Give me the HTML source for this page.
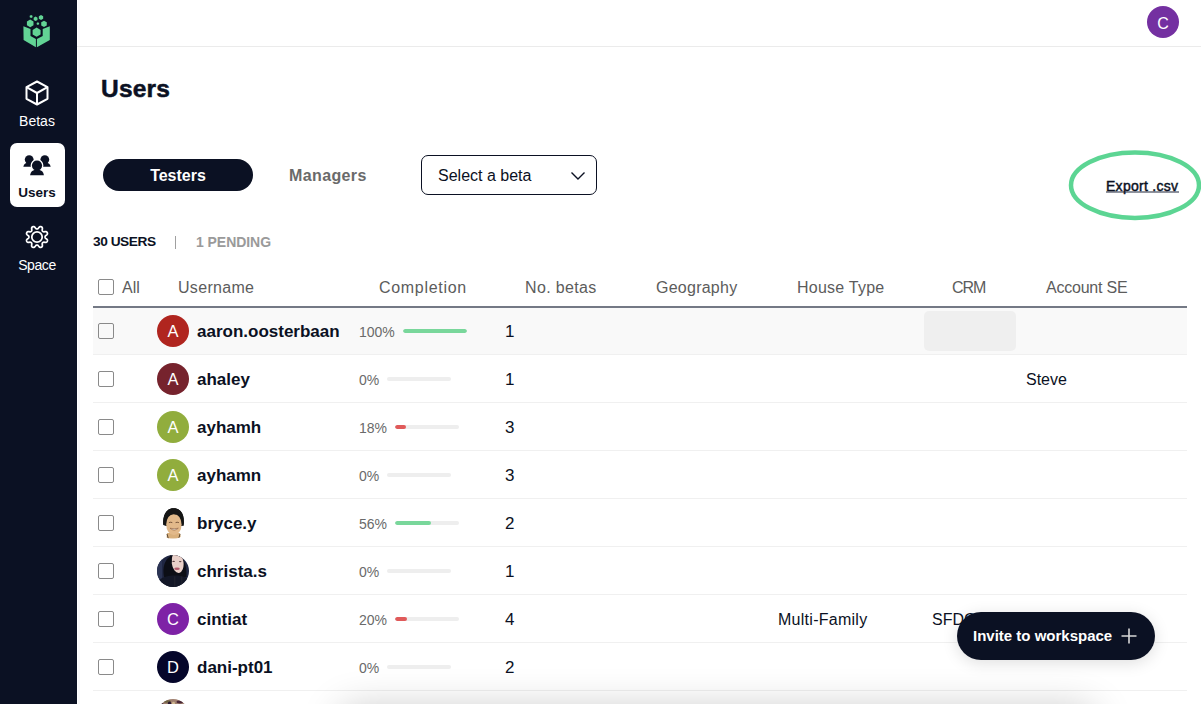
<!DOCTYPE html>
<html><head><meta charset="utf-8">
<style>
*{box-sizing:border-box;margin:0;padding:0}
html,body{width:1201px;height:704px;overflow:hidden;background:#fff;font-family:"Liberation Sans",sans-serif;color:#0b1123}
.abs{position:absolute}
#side{position:absolute;left:0;top:0;width:77px;height:704px;background:#0b1123}
.nav{position:absolute;left:0;width:74px;text-align:center;color:#fff;font-size:14px;line-height:16px}
#navsel{position:absolute;left:10px;top:143px;width:55px;height:64px;background:#fff;border-radius:7px}
#hdrline{position:absolute;left:77px;top:46px;width:1124px;height:1px;background:#ebebeb}
#me{position:absolute;left:1147px;top:6px;width:32px;height:32px;border-radius:50%;background:#7430a1;color:#fff;font-size:16px;line-height:36px;text-align:center}
#title{position:absolute;left:101px;top:76px;font-size:24.5px;line-height:25px;letter-spacing:0.2px;font-weight:bold;color:#0b1123;-webkit-text-stroke:0.5px #0b1123}
#testers{position:absolute;left:103px;top:159px;width:150px;height:32px;border-radius:16px;background:#0b1123;color:#fff;font-weight:bold;font-size:16px;line-height:34px;text-align:center}
#managers{position:absolute;left:289px;top:160px;font-weight:bold;font-size:16px;line-height:32px;color:#6a6a6a;letter-spacing:0.38px}
#select{position:absolute;left:421px;top:155px;width:176px;height:40px;border:1px solid #0b1123;border-radius:7px;font-size:16px;line-height:40px;padding-left:16px;color:#0b1123}
#export{position:absolute;left:1106px;top:178px;font-size:14px;line-height:16px;font-weight:normal;-webkit-text-stroke:0.45px #0b1123;letter-spacing:0.28px;color:#0b1123}
#counts{position:absolute;left:93px;top:234px;font-size:13.5px;line-height:16px;font-weight:bold}
.cb{position:absolute;width:16px;height:16px;border:1px solid #8a8a8a;border-radius:2px;background:transparent}
.th{position:absolute;top:279px;font-size:16px;line-height:18px;color:#5c5c5c}
#thline{position:absolute;left:93px;top:306px;width:1094px;height:2px;background:#747985}
.row{position:absolute;left:93px;width:1094px;height:47px;border-bottom:1px solid #f0f0f0}
.av{position:absolute;left:64px;top:7px;width:32px;height:32px;border-radius:50%;color:#fff;font-size:16.5px;line-height:33px;text-align:center;overflow:hidden}
.un{position:absolute;left:104px;top:14px;font-size:17px;line-height:20px;font-weight:bold;color:#0b1123}
.pct{position:absolute;left:266px;top:16px;font-size:14px;line-height:16px;color:#6a6a6a}
.bar{position:absolute;top:22px;width:64px;height:4px;border-radius:2px;background:#eeeeee;overflow:hidden}
.bar i{position:absolute;left:0;top:0;height:4px;border-radius:2px}
.nb{position:absolute;left:412px;top:14px;font-size:17px;line-height:20px;color:#0b1123}
.cell{position:absolute;top:14px;font-size:16px;line-height:20px;color:#0b1123}
#invite{position:absolute;left:957px;top:612px;width:198px;height:48px;border-radius:24px;background:#0b1123;color:#fff;font-weight:bold;font-size:15px;line-height:48px;padding-left:16px;box-shadow:0 3px 16px rgba(0,0,0,.13)}
</style></head>
<body>
<div id="side">
  <!-- logo -->
  <svg class="abs" style="left:20px;top:10px" width="35" height="40" viewBox="20 10 35 40">
    <g fill="#62d495">
      <polygon points="30.20,19.60 26.91,21.50 26.91,25.30 30.20,27.20 33.49,25.30 33.49,21.50"/>
      <polygon points="31.10,14.90 29.71,15.70 29.71,17.30 31.10,18.10 32.49,17.30 32.49,15.70"/>
      <polygon points="35.60,16.60 33.69,17.70 33.69,19.90 35.60,21.00 37.51,19.90 37.51,17.70"/>
      <polygon points="41.00,14.90 38.83,16.15 38.83,18.65 41.00,19.90 43.17,18.65 43.17,16.15"/>
      <polygon points="37.90,22.20 36.69,22.90 36.69,24.30 37.90,25.00 39.11,24.30 39.11,22.90"/>
      <polygon points="44.00,20.70 41.23,22.30 41.23,25.50 44.00,27.10 46.77,25.50 46.77,22.30"/>
      <polygon points="36.60,27.60 32.62,29.90 32.62,34.50 36.60,36.80 40.58,34.50 40.58,29.90"/>
      <polygon points="23.4,26.2 30.5,28.9 30.5,35.9 35.9,39 35.9,47.3 23.6,40.1"/>
      <polygon points="49.8,26.2 42.7,28.9 42.7,35.9 36.9,39 36.9,47.3 49.8,40.1"/>
    </g>
  </svg>
  <!-- cube -->
  <svg class="abs" style="left:25px;top:80px" width="24" height="26" viewBox="0 0 24 26" fill="none" stroke="#fff" stroke-width="2" stroke-linejoin="round">
    <path d="M12 1.5 L22.5 7.2 V18.8 L12 24.5 L1.5 18.8 V7.2 Z"/>
    <path d="M1.5 7.2 L12 13 L22.5 7.2 M12 13 V24.5"/>
  </svg>
  <div class="nav" style="top:113px">Betas</div>
  <div id="navsel"></div>
  <!-- users icon -->
  <svg class="abs" style="left:23px;top:155px" width="28" height="22" viewBox="0 0 28 22">
    <g fill="#0b1123">
      <circle cx="6.2" cy="4.6" r="4.4"/>
      <path d="M0.3 11.8 C0.9 9 3 7.6 6.2 7.6 C9.4 7.6 11.5 9 12.1 11.8 Z"/>
      <circle cx="21.8" cy="4.6" r="4.4"/>
      <path d="M15.9 11.8 C16.5 9 18.6 7.6 21.8 7.6 C25 7.6 27.1 9 27.7 11.8 Z"/>
    </g>
    <g fill="#fff" stroke="#fff" stroke-width="2.6">
      <circle cx="14" cy="10.6" r="5.1"/>
      <path d="M7.1 20.3 C7.6 16.8 10 14.6 14 14.6 C18 14.6 20.4 16.8 20.9 20.3 Z"/>
    </g>
    <g fill="#0b1123">
      <circle cx="14" cy="10.6" r="5.1"/>
      <path d="M7.1 20.3 C7.6 16.8 10 14.6 14 14.6 C18 14.6 20.4 16.8 20.9 20.3 Z"/>
    </g>
  </svg>
  <div class="nav" style="top:185px;color:#0b1123;font-weight:bold;font-size:13.5px">Users</div>
  <!-- gear -->
  <svg class="abs" style="left:25px;top:225px" width="24" height="24" viewBox="0 0 24 24" fill="none" stroke="#fff" stroke-width="1.75" stroke-linejoin="round">
    <path d="M12.00 3.90 L12.21 3.89 L12.43 3.87 L12.64 3.81 L12.87 3.71 L13.12 3.53 L13.39 3.23 L13.70 2.81 L14.05 2.36 L14.41 1.97 L14.76 1.71 L15.09 1.58 L15.40 1.55 L15.69 1.58 L15.97 1.65 L16.25 1.74 L16.51 1.87 L16.76 2.02 L16.99 2.21 L17.18 2.45 L17.33 2.77 L17.39 3.20 L17.37 3.73 L17.29 4.30 L17.22 4.81 L17.20 5.22 L17.25 5.52 L17.33 5.76 L17.45 5.95 L17.58 6.12 L17.73 6.27 L17.88 6.42 L18.05 6.55 L18.24 6.67 L18.48 6.75 L18.78 6.80 L19.19 6.78 L19.70 6.71 L20.27 6.63 L20.80 6.61 L21.23 6.67 L21.55 6.82 L21.79 7.01 L21.98 7.24 L22.13 7.49 L22.26 7.75 L22.35 8.03 L22.42 8.31 L22.45 8.60 L22.42 8.91 L22.29 9.24 L22.03 9.59 L21.64 9.95 L21.19 10.30 L20.77 10.61 L20.47 10.88 L20.29 11.13 L20.19 11.36 L20.13 11.57 L20.11 11.79 L20.10 12.00 L20.11 12.21 L20.13 12.43 L20.19 12.64 L20.29 12.87 L20.47 13.12 L20.77 13.39 L21.19 13.70 L21.64 14.05 L22.03 14.41 L22.29 14.76 L22.42 15.09 L22.45 15.40 L22.42 15.69 L22.35 15.97 L22.26 16.25 L22.13 16.51 L21.98 16.76 L21.79 16.99 L21.55 17.18 L21.23 17.33 L20.80 17.39 L20.27 17.37 L19.70 17.29 L19.19 17.22 L18.78 17.20 L18.48 17.25 L18.24 17.33 L18.05 17.45 L17.88 17.58 L17.73 17.73 L17.58 17.88 L17.45 18.05 L17.33 18.24 L17.25 18.48 L17.20 18.78 L17.22 19.19 L17.29 19.70 L17.37 20.27 L17.39 20.80 L17.33 21.23 L17.18 21.55 L16.99 21.79 L16.76 21.98 L16.51 22.13 L16.25 22.26 L15.97 22.35 L15.69 22.42 L15.40 22.45 L15.09 22.42 L14.76 22.29 L14.41 22.03 L14.05 21.64 L13.70 21.19 L13.39 20.77 L13.12 20.47 L12.87 20.29 L12.64 20.19 L12.43 20.13 L12.21 20.11 L12.00 20.10 L11.79 20.11 L11.57 20.13 L11.36 20.19 L11.13 20.29 L10.88 20.47 L10.61 20.77 L10.30 21.19 L9.95 21.64 L9.59 22.03 L9.24 22.29 L8.91 22.42 L8.60 22.45 L8.31 22.42 L8.03 22.35 L7.75 22.26 L7.49 22.13 L7.24 21.98 L7.01 21.79 L6.82 21.55 L6.67 21.23 L6.61 20.80 L6.63 20.27 L6.71 19.70 L6.78 19.19 L6.80 18.78 L6.75 18.48 L6.67 18.24 L6.55 18.05 L6.42 17.88 L6.27 17.73 L6.12 17.58 L5.95 17.45 L5.76 17.33 L5.52 17.25 L5.22 17.20 L4.81 17.22 L4.30 17.29 L3.73 17.37 L3.20 17.39 L2.77 17.33 L2.45 17.18 L2.21 16.99 L2.02 16.76 L1.87 16.51 L1.74 16.25 L1.65 15.97 L1.58 15.69 L1.55 15.40 L1.58 15.09 L1.71 14.76 L1.97 14.41 L2.36 14.05 L2.81 13.70 L3.23 13.39 L3.53 13.12 L3.71 12.87 L3.81 12.64 L3.87 12.43 L3.89 12.21 L3.90 12.00 L3.89 11.79 L3.87 11.57 L3.81 11.36 L3.71 11.13 L3.53 10.88 L3.23 10.61 L2.81 10.30 L2.36 9.95 L1.97 9.59 L1.71 9.24 L1.58 8.91 L1.55 8.60 L1.58 8.31 L1.65 8.03 L1.74 7.75 L1.87 7.49 L2.02 7.24 L2.21 7.01 L2.45 6.82 L2.77 6.67 L3.20 6.61 L3.73 6.63 L4.30 6.71 L4.81 6.78 L5.22 6.80 L5.52 6.75 L5.76 6.67 L5.95 6.55 L6.12 6.42 L6.27 6.27 L6.42 6.12 L6.55 5.95 L6.67 5.76 L6.75 5.52 L6.80 5.22 L6.78 4.81 L6.71 4.30 L6.63 3.73 L6.61 3.20 L6.67 2.77 L6.82 2.45 L7.01 2.21 L7.24 2.02 L7.49 1.87 L7.75 1.74 L8.03 1.65 L8.31 1.58 L8.60 1.55 L8.91 1.58 L9.24 1.71 L9.59 1.97 L9.95 2.36 L10.30 2.81 L10.61 3.23 L10.88 3.53 L11.13 3.71 L11.36 3.81 L11.57 3.87 L11.79 3.89 Z"/>
    <circle cx="12" cy="12" r="5.2"/>
  </svg>
  <div class="nav" style="top:257px;letter-spacing:-0.4px">Space</div>
</div>

<div class="abs" style="left:78px;top:0;width:2px;height:704px;background:#fafafa"></div>
<div id="hdrline"></div>
<div id="me">C</div>
<div id="title">Users</div>
<div id="testers">Testers</div>
<div id="managers">Managers</div>
<div id="select">Select a beta
  <svg class="abs" style="left:148px;top:15px" width="16" height="10" viewBox="0 0 16 10" fill="none" stroke="#0b1123" stroke-width="1.4"><path d="M1.5 1.5 L8 8 L14.5 1.5"/></svg>
</div>
<svg class="abs" style="left:1066px;top:148px" width="140" height="75" viewBox="0 0 140 75">
  <ellipse cx="69" cy="37.2" rx="64" ry="32.7" fill="none" stroke="#5cd593" stroke-width="4.5"/>
</svg>
<div class="abs" style="left:1106px;top:191px;width:73px;height:2px;background:#8e929d"></div>
<div id="export">Export .csv</div>

<div id="counts"><span style="letter-spacing:-0.45px;font-size:13.7px">30 USERS</span></div>
<div class="abs" style="left:175px;top:236px;width:1.3px;height:13px;background:#a0a0a0"></div>
<div class="abs" style="left:196px;top:234px;font-size:14px;line-height:16px;font-weight:bold;color:#9a9a9a;letter-spacing:-0.05px">1 PENDING</div>

<div class="cb" style="left:98px;top:279px"></div>
<div class="th" style="left:122px">All</div>
<div class="th" style="left:178px;letter-spacing:0.31px">Username</div>
<div class="th" style="left:379px;letter-spacing:0.69px">Completion</div>
<div class="th" style="left:525px;letter-spacing:0.35px">No. betas</div>
<div class="th" style="left:656px;letter-spacing:0.25px">Geography</div>
<div class="th" style="left:797px;letter-spacing:0.23px">House Type</div>
<div class="th" style="left:952px;letter-spacing:-1.0px">CRM</div>
<div class="th" style="left:1046px;letter-spacing:-0.22px">Account SE</div>
<div id="thline"></div>

<div id="rows">
<div class="row" style="top:308px;background:#f9f9f9">
<div class="abs" style="left:831px;top:3px;width:92px;height:40px;border-radius:5px;background:#efefef"></div>
<div class="cb" style="left:5px;top:15px"></div>
<div class="av" style="background:#b0251f">A</div>
<div class="un">aaron.oosterbaan</div>
<div class="pct">100%<span class="bar" style="position:relative;display:inline-block;top:-4px;margin-left:8px"><i style="width:64px;background:#79d79b"></i></span></div>
<div class="nb">1</div>
</div>
<div class="row" style="top:356px;background:transparent">
<div class="cb" style="left:5px;top:15px"></div>
<div class="av" style="background:#76232d">A</div>
<div class="un">ahaley</div>
<div class="pct">0%<span class="bar" style="position:relative;display:inline-block;top:-4px;margin-left:8px"></span></div>
<div class="nb">1</div>
<div class="cell" style="left:933px">Steve</div>
</div>
<div class="row" style="top:404px;background:transparent">
<div class="cb" style="left:5px;top:15px"></div>
<div class="av" style="background:#91ad3d">A</div>
<div class="un">ayhamh</div>
<div class="pct">18%<span class="bar" style="position:relative;display:inline-block;top:-4px;margin-left:8px"><i style="width:11px;background:#e05a5a"></i></span></div>
<div class="nb">3</div>
</div>
<div class="row" style="top:452px;background:transparent">
<div class="cb" style="left:5px;top:15px"></div>
<div class="av" style="background:#91ad3d">A</div>
<div class="un">ayhamn</div>
<div class="pct">0%<span class="bar" style="position:relative;display:inline-block;top:-4px;margin-left:8px"></span></div>
<div class="nb">3</div>
</div>
<div class="row" style="top:500px;background:transparent">
<div class="cb" style="left:5px;top:15px"></div>
<div class="av" style="background:#fff"><svg width="32" height="32" viewBox="0 0 32 32">
<path d="M6.3 18 C5.4 9 9 1.2 16.5 1.2 C24.5 1.2 27.8 8 26.7 18.8 L24 19 L9 19 Z" fill="#151515"/>
<path d="M10 26 L23 26 L24 31.5 L9.5 31.5 Z" fill="#d9b07c"/>
<path d="M10 27 L11.3 31.5 M23 27 L21.8 31.5" stroke="#4a3a2a" stroke-width="0.9"/>
<ellipse cx="16.9" cy="17.6" rx="7.7" ry="10.6" fill="#e2b98a"/>
<path d="M8.3 16.5 L8.9 12 C10.8 9.2 12.8 7.6 15 7.4 C19 7.1 22.5 7.9 24.8 9.4 L25.4 14 L26.7 18.8 C27.8 8 24.5 1.2 16.5 1.2 C9 1.2 5.4 9 6.3 18 Z" fill="#151515"/>
<path d="M11.9 15.6 Q13.6 14.9 15.3 15.6 M18.6 15.6 Q20.2 14.9 21.9 15.6" stroke="#6b4a32" stroke-width="0.9" fill="none"/>
<path d="M13 21.2 Q17.2 25 21.3 21.2 Q17.2 22.4 13 21.2 Z" fill="#f3ede4" stroke="#8a5a3c" stroke-width="0.6"/>
</svg></div>
<div class="un">bryce.y</div>
<div class="pct">56%<span class="bar" style="position:relative;display:inline-block;top:-4px;margin-left:8px"><i style="width:36px;background:#79d79b"></i></span></div>
<div class="nb">2</div>
</div>
<div class="row" style="top:548px;background:transparent">
<div class="cb" style="left:5px;top:15px"></div>
<div class="av" style="background:#1f2642"><svg width="32" height="32" viewBox="0 0 32 32">
<rect x="0" y="0" width="5" height="32" fill="#2b3454"/>
<path d="M7 22 C5 12 8 1 18 0 C26 0 30 8 29.5 22 Z" fill="#0c0e16"/>
<ellipse cx="20.6" cy="7.6" rx="5.9" ry="10.4" transform="rotate(-8 20.6 7.6)" fill="#e9d0c9"/>
<path d="M14 0 C15 4 14.8 7 14.6 9 C13.6 5 13 2 13.4 0 Z" fill="#0c0e16"/>
<ellipse cx="16.6" cy="6.4" rx="1.3" ry="0.6" fill="#5a4040"/>
<ellipse cx="23.2" cy="6.6" rx="1.3" ry="0.6" fill="#5a4040"/>
<ellipse cx="20" cy="13.8" rx="2.8" ry="1.25" fill="#b35a6c"/>
<path d="M0 27 C4 22 11 20.5 18 20.5 C25 20.5 29 22 32 25 V32 H0 Z" fill="#131727"/>
<path d="M17.8 21.5 V32 M24.8 21.5 V32" stroke="#2e2e36" stroke-width="0.6"/>
</svg></div>
<div class="un">christa.s</div>
<div class="pct">0%<span class="bar" style="position:relative;display:inline-block;top:-4px;margin-left:8px"></span></div>
<div class="nb">1</div>
</div>
<div class="row" style="top:596px;background:transparent">
<div class="cb" style="left:5px;top:15px"></div>
<div class="av" style="background:#7e22a6">C</div>
<div class="un">cintiat</div>
<div class="pct">20%<span class="bar" style="position:relative;display:inline-block;top:-4px;margin-left:8px"><i style="width:12px;background:#e05a5a"></i></span></div>
<div class="nb">4</div>
<div class="cell" style="left:685px;letter-spacing:0.27px">Multi-Family</div>
<div class="cell" style="left:839px">SFDC</div>
</div>
<div class="row" style="top:644px;background:transparent">
<div class="cb" style="left:5px;top:15px"></div>
<div class="av" style="background:#05062a">D</div>
<div class="un">dani-pt01</div>
<div class="pct">0%<span class="bar" style="position:relative;display:inline-block;top:-4px;margin-left:8px"></span></div>
<div class="nb">2</div>
</div>
<div class="row" style="top:692px;background:transparent">
<div class="av" style="background:#a08070"><svg width="32" height="32" viewBox="0 0 32 32">
<ellipse cx="10" cy="2.5" rx="4" ry="1.2" fill="#6a6040"/>
<ellipse cx="12.5" cy="5" rx="1.8" ry="2.5" fill="#2a1830"/>
<ellipse cx="23" cy="3" rx="3.5" ry="1.4" fill="#4a2838"/>
<ellipse cx="4" cy="5" rx="2.5" ry="2" fill="#4a3040"/>
<ellipse cx="16.5" cy="5" rx="1.6" ry="2.3" fill="#d0b890"/>
</svg></div>
</div>
</div>

<div class="abs" style="left:345px;top:714px;width:745px;height:60px;border-radius:8px;background:#fff;box-shadow:0 0 40px 4px rgba(0,0,0,0.24)"></div>
<div id="invite">Invite to workspace
  <svg class="abs" style="left:164px;top:16px" width="16" height="16" viewBox="0 0 16 16" stroke="#d8d8d8" stroke-width="1.6"><path d="M8 0.5 V15.5 M0.5 8 H15.5"/></svg>
</div>
</body></html>
